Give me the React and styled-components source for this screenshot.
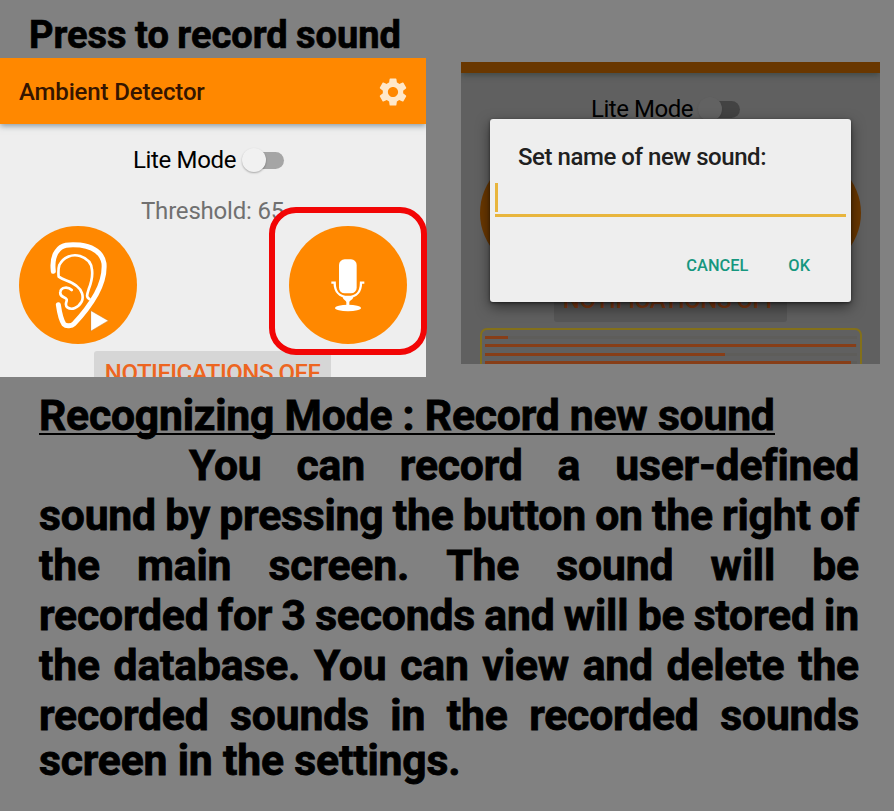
import React from "react";
import styled, { createGlobalStyle } from "styled-components";
import { MdSettings } from "react-icons/md";

const GlobalStyle = createGlobalStyle`
  * { box-sizing: border-box; }
  body { margin: 0; background: #818181; font-family: Roboto, "Liberation Sans", sans-serif; }
`;

const Page = styled.main`
  width: 894px;
  height: 811px;
  overflow: hidden;
  background: #818181;
  color: #000;
`;

const Caption = styled.h1`
  margin: 0;
  height: 58px;
  padding: 13px 0 0 29px;
  font-size: 38px;
  line-height: 45px;
  font-weight: 700;
  white-space: nowrap;
  word-spacing: -1px;
  -webkit-text-stroke: 0.7px #000;
`;

const Shots = styled.section`
  display: flex;
  align-items: flex-start;
  gap: 35px;
  height: 319px;
`;

const Screen = styled.div`
  position: relative;
  flex: none;
  width: ${(p) => p.$width}px;
  height: ${(p) => p.$height}px;
  margin-top: ${(p) => p.$top || 0}px;
  background: ${(p) => (p.$dim ? "#606060" : "#eee")};
`;

const Clip = styled.div`
  width: 100%;
  height: 100%;
  overflow: hidden;
`;

const AppBar = styled.header`
  display: flex;
  align-items: center;
  justify-content: space-between;
  height: ${(p) => p.$height}px;
  padding: 1px 16px 0 19px;
  background: ${(p) => (p.$dim ? "#693700" : "#ff8800")};
  box-shadow: 0 2px 6px ${(p) => (p.$dim ? "rgba(40,55,50,.6)" : "rgba(70,95,110,.6)")};
  color: #351500;
  font-size: 24px;
  font-weight: 500;
  letter-spacing: -0.15px;
  svg { color: #ffe8c9; }
`;

const LiteRow = styled.div`
  display: flex;
  align-items: center;
  height: 30px;
  margin: ${(p) => p.$top}px 0 0 ${(p) => p.$left}px;
  font-size: 24px;
  line-height: 30px;
  letter-spacing: ${(p) => p.$spacing}px;
  white-space: nowrap;
`;

const Label = styled.span`
  width: ${(p) => p.$width}px;
`;

const Track = styled.span`
  display: flex;
  align-items: center;
  width: 42px;
  height: 17px;
  border-radius: 9px;
  background: linear-gradient(90deg, transparent 14px, ${(p) => (p.$dim ? "#434343" : "#a5a5a5")} 14px);
`;

const Thumb = styled.span`
  width: 24px;
  height: 24px;
  border-radius: 50%;
  background: ${(p) => (p.$dim ? "#626262" : "#f1f1f1")};
  box-shadow: 0 1px 2px ${(p) => (p.$dim ? "rgba(0,0,0,.1)" : "rgba(0,0,0,.3)")};
`;

const Threshold = styled.div`
  margin: 21px 0 0 141px;
  height: 30px;
  color: #707070;
  font-size: 24px;
  line-height: 30px;
  letter-spacing: -0.2px;
`;

const Actions = styled.div`
  display: flex;
  justify-content: space-between;
  padding: 0 19px;
  margin-top: ${(p) => p.$top}px;
`;

const RoundButton = styled.button`
  width: 118px;
  height: 118px;
  padding: 0;
  border: 0;
  border-radius: 50%;
  background: ${(p) => (p.$dim ? "#693700" : "#ff8800")};
  svg { display: block; }
`;

const Notify = styled.button`
  display: block;
  width: ${(p) => p.$width}px;
  height: 44px;
  margin: ${(p) => p.$top}px 0 0 ${(p) => p.$left}px;
  padding: 1px 0 0;
  border: 0;
  border-radius: 3px;
  background: ${(p) => (p.$dim ? "#565656" : "#d6d6d6")};
  color: ${(p) => (p.$dim ? "#823a12" : "#ed6520")};
  font: 500 24px/43px Roboto, sans-serif;
  letter-spacing: -0.45px;
  white-space: nowrap;
`;

const Highlight = styled.div`
  position: absolute;
  left: 269px;
  top: 149px;
  width: 158px;
  height: 148px;
  border: 6px solid #f20505;
  border-radius: 27px;
`;

const Levels = styled.div`
  display: flex;
  flex-direction: column;
  gap: 5.4px;
  width: 382px;
  height: 70px;
  margin: 6px 0 0 19px;
  padding: 6px 3px;
  border: 2px solid #83701a;
  border-radius: 7px;
`;

const Level = styled.div`
  flex: none;
  height: 3px;
  background: linear-gradient(90deg, #873e18 ${(p) => p.$fill}px, #5e5d5a ${(p) => p.$fill}px);
`;

const Dialog = styled.div`
  position: absolute;
  left: 29px;
  top: 57px;
  width: 361px;
  height: 183px;
  padding: 22px 5px 0;
  border-radius: 3px;
  background: #eee;
  box-shadow: 0 5px 14px rgba(0, 0, 0, .5), 0 1px 3px rgba(0, 0, 0, .5);
`;

const DialogTitle = styled.h2`
  margin: 0 0 0 23px;
  color: #202020;
  font-size: 24px;
  line-height: 32px;
  font-weight: 500;
  letter-spacing: -0.45px;
  white-space: nowrap;
`;

const NameField = styled.div`
  height: 44px;
  padding-top: 10px;
  border-bottom: 3px solid #e8b53d;
`;

const Caret = styled.div`
  width: 3px;
  height: 29px;
  background: #e8b53d;
`;

const DialogActions = styled.div`
  display: flex;
  justify-content: flex-end;
  gap: 40px;
  padding: 39px 36px 0 0;
`;

const DialogAction = styled.button`
  padding: 0;
  border: 0;
  background: none;
  color: #16977f;
  font: 500 16.4px/20px Roboto, sans-serif;
`;

const Guide = styled.article`
  width: 820px;
  margin: 13px 0 0 39px;
  font-size: 42.67px;
  line-height: 50px;
  font-weight: 700;
  letter-spacing: -0.17px;
  -webkit-text-stroke: 0.8px #000;
`;

const GuideTitle = styled.h2`
  display: flex;
  margin: 0;
  height: 50px;
  font-size: inherit;
  white-space: nowrap;
  letter-spacing: -0.21px;
  span { height: 45px; border-bottom: 2px solid #000; }
`;

const Line = styled.div`
  display: flex;
  justify-content: space-between;
  height: ${(p) => p.$height || 50}px;
  line-height: ${(p) => p.$height || 50}px;
  padding-left: ${(p) => p.$indent || 0}px;
  white-space: nowrap;
`;

const lines = [
  { text: "You can record a user-defined", indent: 150 },
  { text: "sound by pressing the button on the right of" },
  { text: "the main screen. The sound will be" },
  { text: "recorded for 3 seconds and will be stored in" },
  { text: "the database. You can view and delete the" },
  { text: "recorded sounds in the recorded sounds" },
];

const EarIcon = () => (
  <svg width="118" height="118" viewBox="57 48 354 354" fill="none" stroke="#fff" strokeLinecap="round" strokeLinejoin="round">
    <path strokeWidth="15" d="M160 184C157 160 159 140 171 124C184 104 207 102 240 105C275 110 306 126 312 160C315 196 305 222 289 252C270 286 247 315 222 341C215 348 199 350 192 343C183 330 178 305 175 284" />
    <path strokeWidth="8" d="M268 267C258 262 261 253 266 238C275 215 278 195 276 180C275 160 262 145 240 138C215 131 190 142 178 165C175 175 175 190 176 200C192 212 212 212 230 228C246 240 252 260 245 275C235 293 215 302 202 292C192 284 202 275 200 268C195 260 178 262 181 246C183 230 205 230 215 240" />
    <path d="M273 302L325 332L273 363Z" fill="#fff" stroke="#c9873c" strokeWidth="1.5" />
  </svg>
);

const MicIcon = () => (
  <svg width="118" height="118" viewBox="237 77 354 354" fill="#fff">
    <rect x="387" y="177" width="53" height="102" rx="17" />
    <path d="M364 247H374C374 273 388 290 414 290S453 273 453 247H463" fill="none" stroke="#fff" strokeWidth="7" />
    <path d="M398 290H430C428 300 419 299 418 306V318H409V306C408 299 400 300 398 290Z" />
    <ellipse cx="414" cy="323" rx="39" ry="10" />
  </svg>
);

const LiteMode = ({ top, left, labelWidth, spacing, dim }) => (
  <LiteRow $top={top} $left={left} $spacing={spacing}>
    <Label $width={labelWidth}>Lite Mode</Label>
    <Track $dim={dim}><Thumb $dim={dim} /></Track>
  </LiteRow>
);

export default function App() {
  return (
    <Page>
      <GlobalStyle />
      <Caption>Press to record sound</Caption>
      <Shots>
        <Screen $width={426} $height={319}>
          <Clip>
            <AppBar $height={66}>
              <span>Ambient Detector</span>
              <MdSettings size={34} />
            </AppBar>
            <LiteMode top={21} left={133} labelWidth={109} spacing={-0.35} />
            <Threshold>Threshold: 65</Threshold>
            <Actions $top={0}>
              <RoundButton><EarIcon /></RoundButton>
              <RoundButton><MicIcon /></RoundButton>
            </Actions>
            <Notify $width={237} $left={94} $top={7}>NOTIFICATIONS OFF</Notify>
          </Clip>
          <Highlight />
        </Screen>
        <Screen $width={419} $height={302} $top={4} $dim>
          <Clip>
            <AppBar $height={11} $dim />
            <LiteMode top={21} left={130} labelWidth={107} spacing={-0.45} dim />
            <Actions $top={30}>
              <RoundButton $dim />
              <RoundButton $dim />
            </Actions>
            <Notify $width={233} $left={93} $top={6} $dim>NOTIFICATIONS OFF</Notify>
            <Levels>
              <Level $fill={23} />
              <Level $fill={371} />
              <Level $fill={240} />
              <Level $fill={366} />
            </Levels>
          </Clip>
          <Dialog>
            <DialogTitle>Set name of new sound:</DialogTitle>
            <NameField><Caret /></NameField>
            <DialogActions>
              <DialogAction>CANCEL</DialogAction>
              <DialogAction>OK</DialogAction>
            </DialogActions>
          </Dialog>
        </Screen>
      </Shots>
      <Guide>
        <GuideTitle><span>Recognizing Mode : Record new sound</span></GuideTitle>
        {lines.map(({ text, indent }) => (
          <Line key={text} $indent={indent}>
            {text.split(" ").map((word, i) => <span key={i}>{word}</span>)}
          </Line>
        ))}
        <Line $height={40}><span>screen in the settings.</span></Line>
      </Guide>
    </Page>
  );
}
